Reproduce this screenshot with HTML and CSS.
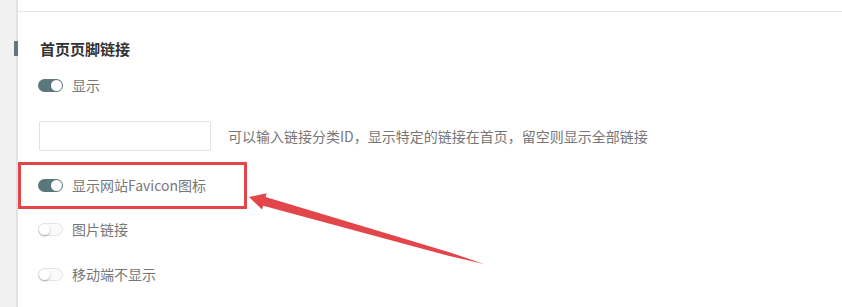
FILE: index.html
```html
<!DOCTYPE html>
<html lang="zh-CN">
<head>
<meta charset="utf-8">
<title>首页页脚链接</title>
<link rel="stylesheet" href="styles.css">
</head>
<body>
<div class="page">
  <aside class="side"></aside>
  <main class="main">
    <div class="topbar"></div>
    <section class="section">
      <h3 class="heading">首页页脚链接</h3>
      <div class="row row-1">
        <span class="switch on"><span class="knob"></span></span>
        <span class="label">显示</span>
      </div>
      <div class="row row-input">
        <input class="field" type="text">
        <span class="hint">可以输入链接分类ID，显示特定的链接在首页，留空则显示全部链接</span>
      </div>
      <div class="row row-2">
        <span class="switch on"><span class="knob"></span></span>
        <span class="label">显示网站Favicon图标</span>
      </div>
      <div class="row row-3">
        <span class="switch off"><span class="knob"></span></span>
        <span class="label">图片链接</span>
      </div>
      <div class="row row-4">
        <span class="switch off"><span class="knob"></span></span>
        <span class="label">移动端不显示</span>
      </div>
    </section>
  </main>
  <div class="mark-box"></div>
  <svg class="mark-arrow" width="842" height="307" viewBox="0 0 842 307">
    <polygon fill="#e2464a" points="249,197 266.6,193.2 265.6,197.1 449.3,252.2 484,264 448.3,255.7 263.2,205.7 262,209.4"/>
  </svg>
</div>
</body>
</html>
```

FILE: styles.css
```css
html, body {
  margin: 0;
  padding: 0;
  background: #fff;
}
body {
  font-family: "Noto Sans CJK SC", "Noto Sans", sans-serif;
  color: #777;
}
.page {
  position: relative;
  display: flex;
  width: 842px;
  height: 307px;
  overflow: hidden;
}
.side {
  width: 16px;
  flex: none;
  background: #f1f1f1;
  border-right: 2px solid #e2e2e2;
}
.main {
  flex: 1;
}
.topbar {
  height: 11px;
  border-bottom: 1px solid #e6e6e6;
}
.section {
  padding-left: 20px;
}
.heading {
  position: relative;
  margin: 27px 0 0 2px;
  font-size: 15px;
  line-height: 20px;
  font-weight: bold;
  color: #333;
}
.heading::before {
  content: "";
  position: absolute;
  left: -26px;
  top: 2px;
  width: 4px;
  height: 15px;
  background: #5d7b7e;
}
.row {
  display: flex;
  align-items: center;
  height: 20px;
}
.row-1 { margin-top: 16px; }
.row-input { margin-top: 26px; height: 30px; padding-left: 1px; }
.row-2 { margin-top: 24px; }
.row-3 { margin-top: 24px; }
.row-4 { margin-top: 25px; }
.label {
  margin-left: 9px;
  font-size: 14px;
  line-height: 20px;
  color: #777;
}
.switch {
  position: relative;
  box-sizing: border-box;
  width: 25px;
  height: 13px;
  border-radius: 7px;
}
.switch .knob {
  position: absolute;
  top: 1px;
  width: 11px;
  height: 11px;
  border-radius: 50%;
  background: #fff;
}
.switch.on {
  background: #5a777b;
}
.switch.on .knob {
  right: 1px;
}
.switch.off {
  background: #fafafa;
  border: 1px solid #e4e4e4;
}
.switch.off .knob {
  top: 0;
  left: 0;
  box-shadow: 0 1px 2px rgba(0, 0, 0, 0.3);
}
.field {
  box-sizing: border-box;
  width: 172px;
  height: 30px;
  margin: 0;
  border: 1px solid #e2e2e2;
  border-radius: 2px;
  background: #fff;
  outline: none;
}
.hint {
  margin-left: 17px;
  font-size: 14px;
  line-height: 20px;
  color: #777;
}
.mark-box {
  position: absolute;
  left: 18px;
  top: 162px;
  width: 229px;
  height: 47px;
  box-sizing: border-box;
  border: 3px solid #e2464a;
}
.mark-arrow {
  position: absolute;
  left: 0;
  top: 0;
  pointer-events: none;
}
```
